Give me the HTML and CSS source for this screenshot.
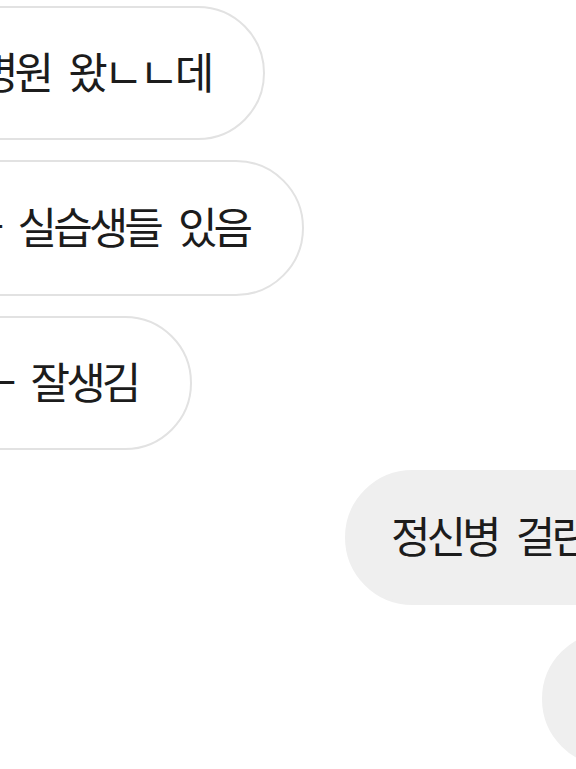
FILE: index.html
```html
<!DOCTYPE html>
<html lang="ko">
<head>
    <meta charset="UTF-8">
    <meta name="viewport" content="width=device-width, initial-scale=1.0">
    <title>채팅</title>
    <link rel="stylesheet" href="styles.css">
</head>
<body>
    <div class="chat">
        <!-- 받은 메시지 -->
        <div class="row left">
            <div class="bubble received b1">병원 왔ㄴㄴ데</div>
        </div>
        <div class="row left">
            <div class="bubble received b2">과 실습생들 있음</div>
        </div>
        <div class="row left">
            <div class="bubble received b3">ㅡ 잘생김</div>
        </div>

        <!-- 보낸 메시지 -->
        <div class="row right">
            <div class="bubble sent b4">정신병 걸린</div>
        </div>
        <div class="row right">
            <div class="bubble sent b5">ㅋㅋ</div>
        </div>
    </div>
</body>
</html>
```

FILE: styles.css
```css
/* Estilo do corpo */
body {
    font-family: "Noto Sans CJK KR", "Noto Sans", sans-serif;
    background-color: #ffffff;
    color: #1c1c1c;
    margin: 0;
    padding: 0;
    width: 576px;
    height: 769px;
    overflow: hidden;
}

/* Lista de mensagens */
.chat {
    display: flex;
    flex-direction: column;
    gap: 20px;
    padding-top: 6px;
}

.row {
    display: flex;
    white-space: nowrap;
}

/* Balões */
.bubble {
    box-sizing: border-box;
    height: 134px;
    font-size: 43px;
    line-height: 48px;
    padding: 38px 53px 44px;
    border-radius: 68px;
    letter-spacing: -4px;
    word-spacing: 10px;
}

.received {
    background-color: #ffffff;
    border: 2px solid #e2e2e2;
}

.b1 {
    margin-left: -76px;
}

.b2 {
    height: 136px;
    padding-top: 39px;
    margin-left: -91px;
}

.b3 {
    margin-left: -78px;
}

.sent {
    background-color: #efefef;
    border: 2px solid #efefef;
    padding-left: 44px;
}

.b4 {
    height: 135px;
    margin-left: 345px;
}

.b5 {
    margin-top: 7px;
    margin-left: 542px;
}
```
